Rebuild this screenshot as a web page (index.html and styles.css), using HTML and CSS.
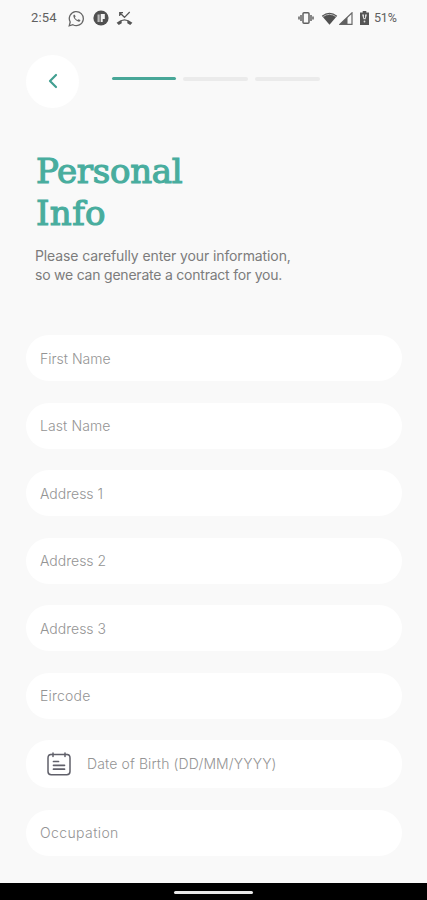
FILE: index.html
```html
<!DOCTYPE html>
<html lang="en">
<head>
<meta charset="utf-8">
<title>Personal Info</title>
<link rel="stylesheet" href="styles.css">
</head>
<body>
<div class="screen">
  <header class="status">
    <span class="time">2:54</span>
    <svg class="whatsapp" width="17" height="17" viewBox="0 0 17 17" fill="none" stroke="#666" stroke-width="1.3"><path d="M1.200 15.800l1-3.800a7 7 0 1 1 2.700 2.700z"/><path d="M5.700 4.800c-1 1 0 3.300 1.700 5s3.900 2.400 4.800 1.300l.2-1-1.900-.9-1 .9C8.300 9.600 7.300 8.500 6.900 7.500l.7-.9-.8-1.900z" fill="#666" stroke="none"/></svg>
    <svg class="badge" width="16" height="16" viewBox="0 0 16 16"><circle cx="8" cy="8" r="7.600" fill="#505050"/><path d="M4.500 4.500h2.200V12H4.500z" fill="#bbb"/><path d="M7.700 4h4.100v5H9.700v3h-2z" fill="#f4f4f4"/></svg>
    <svg class="missed" width="17" height="15" viewBox="0 0 17 15" fill="none" stroke="#555"><path d="M3.700 5V1.700H7M4 2l4.500 4.300L13.700 1" stroke-width="1.200"/><path d="M.6 11.700Q8.500 4.700 16.400 11.700l-2.200 2.200-2.900-1.700V9.900Q8.500 9 5.700 9.900v2.300l-2.900 1.700z" fill="#555" stroke="none"/></svg>
    <svg class="vibrate" width="16" height="14" viewBox="0 0 16 14" fill="none" stroke="#606060" stroke-width="1.500"><rect x="5" y="1.700" width="6" height="10.600" rx="1"/><path d="M3 4v6M13 4v6M1 5.500v3M15 5.500v3"/></svg>
    <svg class="wifi" width="17" height="13" viewBox="0 0 17 13"><path d="M.8 3.800Q8.500-2.500 16.200 3.800L8.500 12.700z" fill="#505050"/><path d="M2.200 4.500Q8.500.2 14.800 4.500" fill="none" stroke="#bbb" stroke-width="1"/></svg>
    <svg class="signal" width="14" height="13" viewBox="0 0 14 13"><path d="M1 12.300L13 .8v11.500z" fill="none" stroke="#686868" stroke-width="1.200"/><path d="M1 12.300L8.500 5v7.300z" fill="#606060"/></svg>
    <svg class="battery" width="9" height="14" viewBox="0 0 9 14"><path d="M2.700 0h3.600v1.500H9V14H0V1.500h2.700z" fill="#555"/><path d="M2 3.500h5L5.500 8.200h-2z" fill="#ddd"/><path d="M4 3h1v4H4z" fill="#555"/><circle cx="4.500" cy="10.500" r=".9" fill="#ddd"/></svg>
    <span class="percent">51%</span>
  </header>
  <nav class="top">
    <button class="back" aria-label="Back"><svg width="10" height="16" viewBox="0 0 10 16" fill="none" stroke="#429f91" stroke-width="2.200" stroke-linecap="round" stroke-linejoin="round"><path d="M8 2L2 8l6 6"/></svg></button>
    <div class="steps"><i class="step active"></i><i class="step"></i><i class="step"></i></div>
  </nav>
  <h1>Personal<br><span class="w2">Info</span></h1>
  <p class="intro"><span class="l1">Please carefully enter your information,</span><br><span class="l2">so we can generate a contract for you.</span></p>
  <main class="fields">
    <div class="field">First Name</div>
    <div class="field last">Last Name</div>
    <div class="field">Address 1</div>
    <div class="field">Address 2</div>
    <div class="field">Address 3</div>
    <div class="field eircode">Eircode</div>
    <div class="field date"><svg width="24" height="24" viewBox="0 0 24 24" fill="none" stroke="#60606a" stroke-width="1.500" stroke-linecap="round"><path d="M8.500 2.500h7M4 2.500Q1 2.500 1 6v13.500Q1 22.700 4.200 22.700h15.600q3.200 0 3.200-3.200V6q0-3.500-3-3.500"/><path d="M6 .9v3.600M18 .9v3.600M4 2.500h4M16 2.500h4" /><path d="M6.500 9.500h5M6.500 13.300h11M6.500 17.200h11" stroke-width="1.700"/></svg><span>Date of Birth (DD/MM/YYYY)</span></div>
    <div class="field occupation">Occupation</div>
  </main>
  <footer class="navbar"><i></i></footer>
</div>
</body>
</html>
```
FILE: styles.css
```css
* { box-sizing: border-box; }
body { margin: 0; background: #f9f9f9; font-family: Inter, sans-serif; }
.screen { width: 427px; height: 900px; overflow: hidden; display: flex; flex-direction: column; background: #f9f9f9; }
.status { height: 36px; flex: none; display: flex; align-items: center; padding-left: 31px; color: #606060; font: 13px/36px Roboto, sans-serif; }
.status svg { flex: none; }
.time { width: 37px; letter-spacing: .2px; }
.badge { margin-left: 8px; }
.missed { margin-left: 7px; }
.vibrate { margin-left: 165px; }
.wifi { margin-left: 7px; }
.signal { margin-left: 1px; }
.battery { margin-left: 7px; }
.percent { margin-left: 5px; font-size: 12.5px; letter-spacing: -.2px; }
.top { height: 52px; flex: none; margin: 19px 0 0 26px; display: flex; }
.back { width: 53px; height: 53px; padding: 0; border: 0; border-radius: 50%; background: #fff; display: flex; align-items: center; justify-content: center; }
.back svg { margin-top: -1px; }
.steps { display: flex; gap: 7px; margin: 22px 0 0 33px; }
.step { width: 65px; height: 4px; border-radius: 2px; background: #ebebeb; }
.step.active { height: 3px; background: #48a798; width: 64px; }
h1 { margin: 43px 0 0 36px; height: 84px; flex: none; font: normal 34px/42px "DejaVu Serif", serif; letter-spacing: -.3px; -webkit-text-stroke: 1.2px #48ad9e; color: #48ad9e; white-space: nowrap; }
.w2 { letter-spacing: .4px; }
.intro { margin: 12px 0 0 35px; height: 38px; flex: none; font-size: 14px; line-height: 19px; letter-spacing: -.11px; color: #7c7c7c; white-space: nowrap; }
.l2 { letter-spacing: -.22px; }
.fields { margin: 51px 25px 0 26px; display: flex; flex-direction: column; gap: 21.5px; }
.field { height: 46px; border-radius: 23px; background: #fff; padding-left: 14px; display: flex; align-items: center; font-size: 14px; font-weight: 300; color: #949494; white-space: nowrap; }
.last { letter-spacing: .1px; }
.eircode { letter-spacing: .2px; }
.occupation { letter-spacing: .4px; }
.date { height: 48px; padding-left: 21px; gap: 16px; letter-spacing: .12px; }
.date span { margin-top: -1px; }
.navbar { height: 17px; flex: none; margin-top: auto; background: #000; display: flex; justify-content: center; align-items: center; }
.navbar i { width: 79px; height: 3px; border-radius: 2px; background: #e8e8e8; margin-top: 2px; }
```
